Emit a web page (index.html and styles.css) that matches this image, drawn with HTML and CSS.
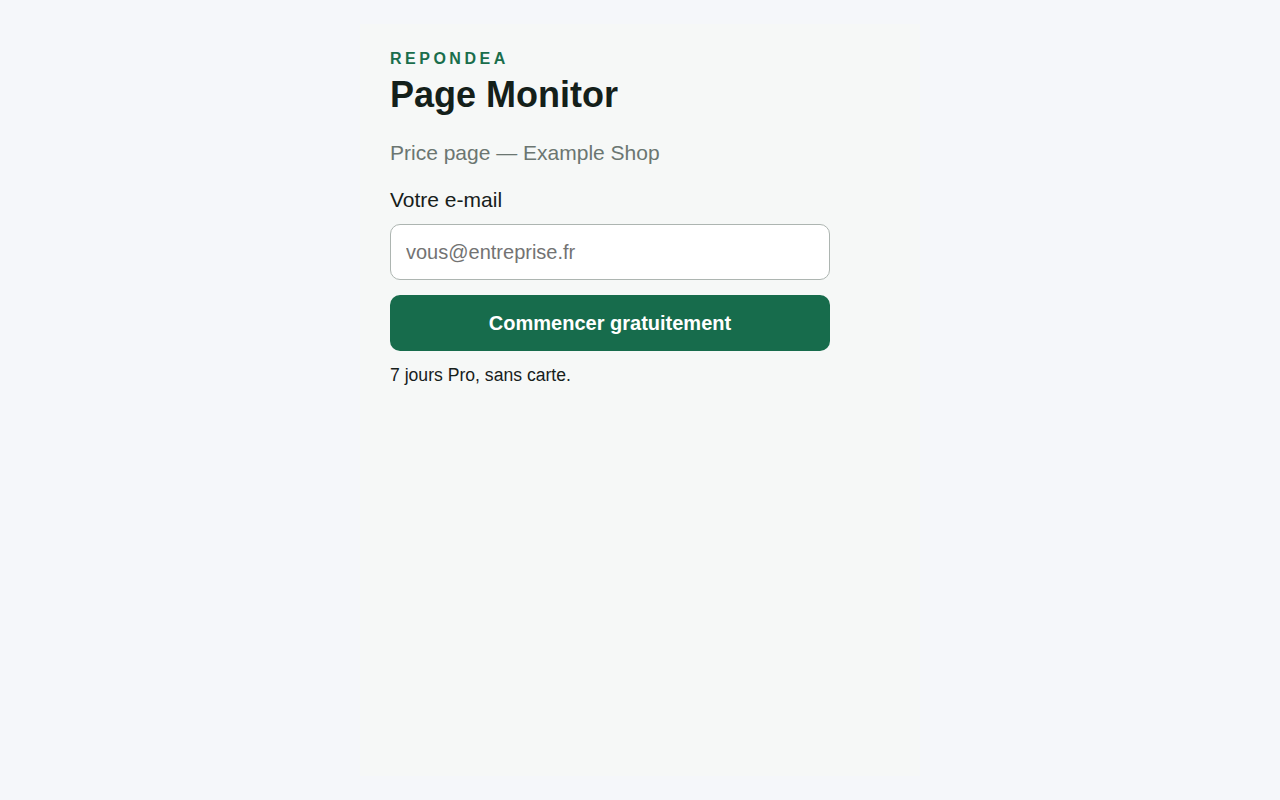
FILE: index.html
```html
<!DOCTYPE html>
<html lang="fr">
<head>
<meta charset="utf-8">
<title>Page Monitor</title>
<link rel="stylesheet" href="styles.css">
</head>
<body>
<main class="card">
  <div class="content">
    <div class="brand">REPONDEA</div>
    <h1 class="title">Page Monitor</h1>
    <p class="subtitle">Price page — Example Shop</p>
    <form class="form">
      <label class="label" for="email">Votre e-mail</label>
      <input class="input" id="email" type="email" placeholder="vous@entreprise.fr">
      <button class="button" type="button">Commencer gratuitement</button>
    </form>
    <p class="note">7 jours Pro, sans carte.</p>
  </div>
</main>
</body>
</html>
```
FILE: styles.css
```css
* { box-sizing: border-box; }
html, body { margin: 0; padding: 0; }
body {
  background: #f5f7fa;
  font-family: "Liberation Sans", Arial, sans-serif;
  color: #16201b;
  padding: 24px 0;
  min-height: 100vh;
  display: flex;
  justify-content: center;
}
.card {
  width: 560px;
  background: #f6f8f7;
  padding: 25px 30px 24px;
  min-height: 752px;
}
.content { width: 440px; }
.brand {
  font-size: 16px;
  font-weight: 700;
  letter-spacing: 3.5px;
  color: #1a6e4c;
  line-height: 20px;
}
.title {
  margin: 5px 0 0;
  font-size: 36px;
  font-weight: 700;
  line-height: 42px;
  color: #14201a;
}
.subtitle {
  margin: 24px 0 0;
  font-size: 21px;
  line-height: 26px;
  color: #6b7671;
}
.form { display: flex; flex-direction: column; margin-top: 21px; }
.label { font-size: 21px; line-height: 26px; color: #16201b; }
.input {
  margin-top: 11px;
  height: 56px;
  border: 1px solid #adb5b1;
  border-radius: 10px;
  background: #fff;
  padding: 0 15px;
  font-family: inherit;
  font-size: 20px;
  color: #16201b;
  outline: none;
}
.input::placeholder { color: #737373; }
.button {
  margin-top: 15px;
  height: 56px;
  border: 0;
  border-radius: 10px;
  background: #176c4c;
  color: #fff;
  font-family: inherit;
  font-size: 20px;
  font-weight: 700;
}
.note { margin: 13px 0 0; font-size: 17.6px; line-height: 22px; color: #16201b; }
```
